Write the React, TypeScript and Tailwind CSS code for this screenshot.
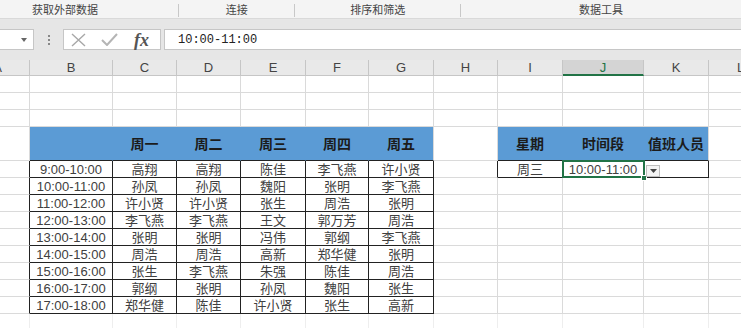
import React from "react";

const FONT = { fontFamily: '"Liberation Sans", "Noto Sans CJK SC", sans-serif' };
const GRID =
  "grid grid-cols-[64px_83px_64px_64px_65px_63px_65px_64px_65px_81px_65px_64px] grid-rows-[100%]";
const LETTERS = ["A", "B", "C", "D", "E", "F", "G", "H", "I", "J", "K", "L"];
const DAYS = ["周一", "周二", "周三", "周四", "周五"];

const SCHEDULE: [string, string[]][] = [
  ["9:00-10:00", ["高翔", "高翔", "陈佳", "李飞燕", "许小贤"]],
  ["10:00-11:00", ["孙凤", "孙凤", "魏阳", "张明", "李飞燕"]],
  ["11:00-12:00", ["许小贤", "许小贤", "张生", "周浩", "张明"]],
  ["12:00-13:00", ["李飞燕", "李飞燕", "王文", "郭万芳", "周浩"]],
  ["13:00-14:00", ["张明", "张明", "冯伟", "郭纲", "李飞燕"]],
  ["14:00-15:00", ["周浩", "周浩", "高新", "郑华健", "张明"]],
  ["15:00-16:00", ["张生", "李飞燕", "朱强", "陈佳", "周浩"]],
  ["16:00-17:00", ["郭纲", "张明", "孙凤", "魏阳", "张生"]],
  ["17:00-18:00", ["郑华健", "陈佳", "许小贤", "张生", "高新"]],
];

type Edge = "grid" | "black" | "blue" | "faint";
const RIGHT: Record<Edge, string> = {
  grid: "border-r-[#dadada]",
  black: "border-r-[#222]",
  blue: "border-r-[#5b9bd5]",
  faint: "border-r-[#eeeeee]",
};
const BOTTOM: Record<Edge, string> = {
  grid: "border-b-[#dadada]",
  black: "border-b-[#222]",
  blue: "border-b-[#5b9bd5]",
  faint: "border-b-[#f4f4f4]",
};

type CellSpec = {
  text?: string;
  r?: Edge;
  b?: Edge;
  blue?: boolean;
  selected?: boolean;
};

function Cell({ text, r = "grid", b = "grid", blue, selected }: CellSpec) {
  return (
    <div
      className={`relative min-h-0 flex items-center justify-center border-r border-b whitespace-nowrap leading-none ${RIGHT[r]} ${BOTTOM[b]} ${
        blue ? "bg-[#5b9bd5] font-bold text-[14px] text-[#1b1b1b]" : "bg-white text-[13px] text-[#404040]"
      } ${selected ? "z-10" : ""}`}
    >
      {text}
      {selected && (
        <>
          <div className="absolute -left-[1px] -top-[1px] right-[-2px] bottom-[-1px] border-2 border-[#217346]" />
          <div className="absolute right-[-4px] bottom-[-4px] w-[6px] h-[6px] bg-[#217346] border border-white" />
          <div className="absolute left-[83px] top-[4px] w-[14px] h-[12px] bg-[#f3f3f3] border border-[#bdbdbd] flex items-center justify-center">
            <svg width="7" height="4" viewBox="0 0 7 4">
              <path d="M0 0h7L3.5 4z" fill="#444" />
            </svg>
          </div>
        </>
      )}
    </div>
  );
}

function Row({ h, cells }: { h: string; cells: CellSpec[] }) {
  return (
    <div className={`${GRID} ${h}`}>
      {cells.map((c, i) => (
        <Cell key={i} {...c} />
      ))}
    </div>
  );
}

function emptyRow(edge: Edge = "grid"): CellSpec[] {
  return LETTERS.map(() => ({ r: edge, b: edge }));
}

function headRow(): CellSpec[] {
  return LETTERS.map((_, c) => {
    if (c >= 1 && c <= 6)
      return { blue: true, text: c === 1 ? "" : DAYS[c - 2], r: c < 6 ? "blue" : "grid", b: "black" } as CellSpec;
    if (c >= 8 && c <= 10)
      return {
        blue: true,
        text: ["星期", "时间段", "值班人员"][c - 8],
        r: c < 10 ? "blue" : "grid",
        b: "black",
      } as CellSpec;
    return {};
  });
}

function dataRow(i: number): CellSpec[] {
  const [time, names] = SCHEDULE[i];
  return LETTERS.map((_, c) => {
    if (c === 0) return { r: "black" } as CellSpec;
    if (c === 1) return { text: time, r: "black", b: "black" } as CellSpec;
    if (c >= 2 && c <= 6) return { text: names[c - 2], r: "black", b: "black" } as CellSpec;
    if (i === 0) {
      if (c === 7) return { r: "black" } as CellSpec;
      if (c === 8) return { text: "周三", r: "black", b: "black" } as CellSpec;
      if (c === 9) return { text: "10:00-11:00", r: "black", b: "black", selected: true } as CellSpec;
      if (c === 10) return { r: "black", b: "black" } as CellSpec;
    }
    return {};
  });
}

function Ribbon() {
  return (
    <div className="flex h-[19px] bg-[#f4f4f4] border-b border-[#d9d9d9] text-[11px] leading-none text-[#444] items-center pt-[3px]">
      <div className="w-[190px] pl-[32px] flex items-center">获取外部数据</div>
      <span className="w-px h-[13px] bg-[#c8c8c8]" />
      <div className="w-[124px] flex justify-center">连接</div>
      <span className="w-px h-[13px] bg-[#c8c8c8]" />
      <div className="w-[178px] flex justify-center">排序和筛选</div>
      <span className="w-px h-[13px] bg-[#c8c8c8]" />
      <div className="w-[302px] flex justify-center">数据工具</div>
    </div>
  );
}

function FormulaBar() {
  return (
    <div className="h-[41px] bg-[#e6e6e6] pt-[10px]">
      <div className="flex h-[21px] items-stretch">
        <div className="w-[34px] bg-white border-y border-r border-[#c6c6c6] flex items-center justify-end pr-[6px]">
          <svg width="6" height="4" viewBox="0 0 6 4">
            <path d="M0 0h6L3 4z" fill="#666" />
          </svg>
        </div>
        <div className="w-[29px] flex items-center justify-center">
          <div className="flex flex-col gap-[2px]">
            <span className="w-[2px] h-[2px] bg-[#888]" />
            <span className="w-[2px] h-[2px] bg-[#888]" />
            <span className="w-[2px] h-[2px] bg-[#888]" />
          </div>
        </div>
        <div className="w-[98px] bg-white border border-[#c6c6c6] flex items-center pl-[7px] gap-[15px]">
          <svg width="15" height="14" viewBox="0 0 15 14">
            <path d="M1 1l13 12M14 1L1 13" stroke="#a8a8a8" strokeWidth="1.4" fill="none" />
          </svg>
          <svg width="17" height="13" viewBox="0 0 17 13">
            <path d="M1 7l5 5L16 1" stroke="#b5b5b5" strokeWidth="2" fill="none" />
          </svg>
          <span
            className="italic font-bold text-[18px] leading-none text-[#555] ml-[1px]"
            style={{ fontFamily: '"Liberation Serif", serif' }}
          >
            fx
          </span>
        </div>
        <div className="w-[3px]" />
        <div
          className="flex-1 bg-white border-y border-l border-[#c6c6c6] flex items-center pl-[13px] text-[12px] text-[#222]"
          style={{ fontFamily: '"Liberation Mono", monospace' }}
        >
          10:00-11:00
        </div>
      </div>
    </div>
  );
}

function ColumnHeaders() {
  return (
    <div className={`${GRID} h-[16px] text-[13px] leading-none text-[#444]`}>
      {LETTERS.map((l) =>
        l === "J" ? (
          <div
            key={l}
            className="flex items-center justify-center bg-[#d4d4d4] border-r border-[#c6c6c6] border-b-2 border-b-[#217346] text-[#217346]"
          >
            {l}
          </div>
        ) : (
          <div
            key={l}
            className="flex items-center justify-center bg-[#e9e9e9] border-r border-b border-[#c6c6c6]"
          >
            {l}
          </div>
        )
      )}
    </div>
  );
}

export default function App() {
  return (
    <div className="w-[741px] h-[328px] overflow-hidden bg-white" style={FONT}>
      <Ribbon />
      <FormulaBar />
      <div className="-ml-[34px] w-[807px]">
        <ColumnHeaders />
        <Row h="h-[17px]" cells={emptyRow()} />
        <Row h="h-[17px]" cells={emptyRow()} />
        <Row h="h-[17px]" cells={emptyRow()} />
        <Row h="h-[34px]" cells={headRow()} />
        {SCHEDULE.map((_, i) => (
          <Row key={i} h="h-[17px]" cells={dataRow(i)} />
        ))}
        <Row h="h-[17px]" cells={emptyRow("faint")} />
      </div>
    </div>
  );
}
